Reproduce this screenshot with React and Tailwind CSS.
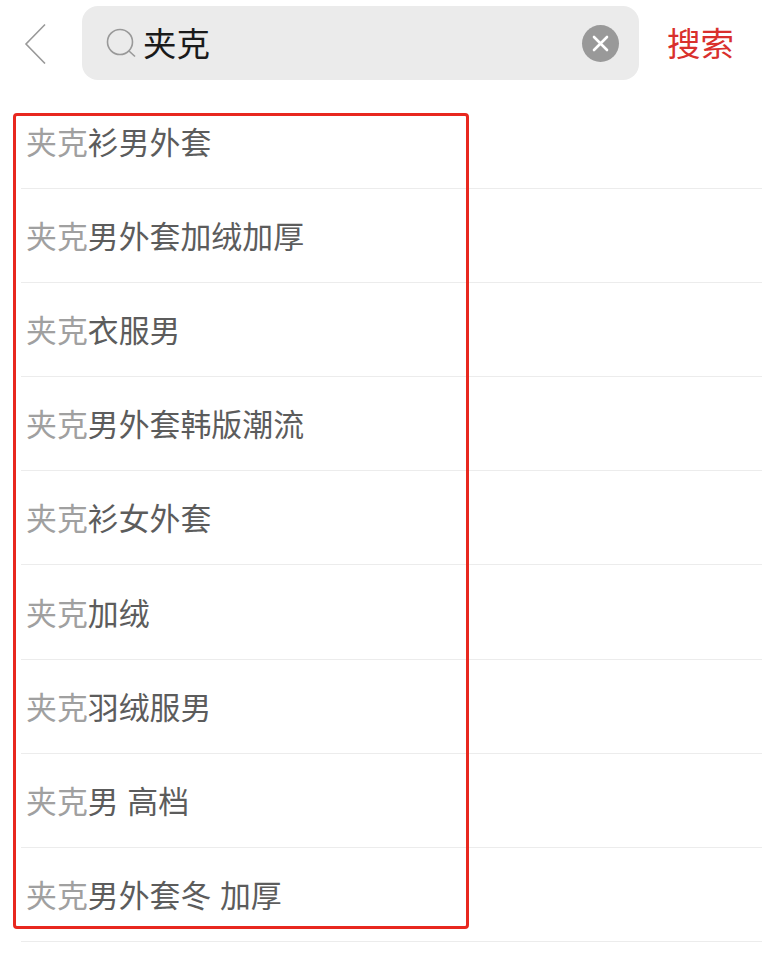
const rows = [
  '衫男外套',
  '男外套加绒加厚',
  '衣服男',
  '男外套韩版潮流',
  '衫女外套',
  '加绒',
  '羽绒服男',
  '男 高档',
  '男外套冬 加厚',
]

const App = () => {
  return (
    <div className="relative w-[762px] h-[958px] bg-white overflow-hidden font-['Liberation_Sans','Noto_Sans_CJK_SC',sans-serif]">
      <div className="flex items-center h-[86px]">
        <div className="w-[82px] pl-[24px] shrink-0">
          <svg width="24" height="42" viewBox="0 0 24 42" fill="none" stroke="#999999" strokeWidth="1.6">
            <path d="M21 2.5 L2 22 L21 41.5" />
          </svg>
        </div>
        <div className="flex items-center w-[557px] h-[74px] bg-[#ebebeb] rounded-[16px] pl-[24px] pr-[20px]">
          <svg width="30" height="30" viewBox="0 0 30 30" fill="none" stroke="#999999" strokeWidth="1.6">
            <circle cx="14" cy="14" r="12.5" />
            <path d="M23 23 L29 28.5" />
          </svg>
          <span className="ml-[7px] pt-[4px] flex-1 text-[33.5px] leading-none text-[#1a1a1a]">夹克</span>
          <div className="flex items-center justify-center w-[37px] h-[37px] rounded-full bg-[#999999]">
            <svg width="19" height="19" viewBox="0 0 19 19" stroke="#ffffff" strokeWidth="2.6" strokeLinecap="round">
              <path d="M3 3 L16 16 M16 3 L3 16" />
            </svg>
          </div>
        </div>
        <span className="ml-[28px] pt-[3px] text-[33.5px] leading-none text-[#d9302c]">搜索</span>
      </div>

      <div className="ml-[21px] mt-[9px]">
        {rows.map((r, i) => (
          <div key={i} className="flex items-center h-[94.1px] pl-[5px] pt-[6px] border-b border-[#ececec] text-[30.9px] leading-none text-[#5c5c5c]">
            <span className="text-[#a0a0a0]">夹克</span>
            <span className="whitespace-pre">{r}</span>
          </div>
        ))}
      </div>

      <div className="absolute left-[13px] top-[113px] w-[456px] h-[816px] border-[3px] border-[#e8281f] rounded-[4px]"></div>
    </div>
  )
}

export default App
